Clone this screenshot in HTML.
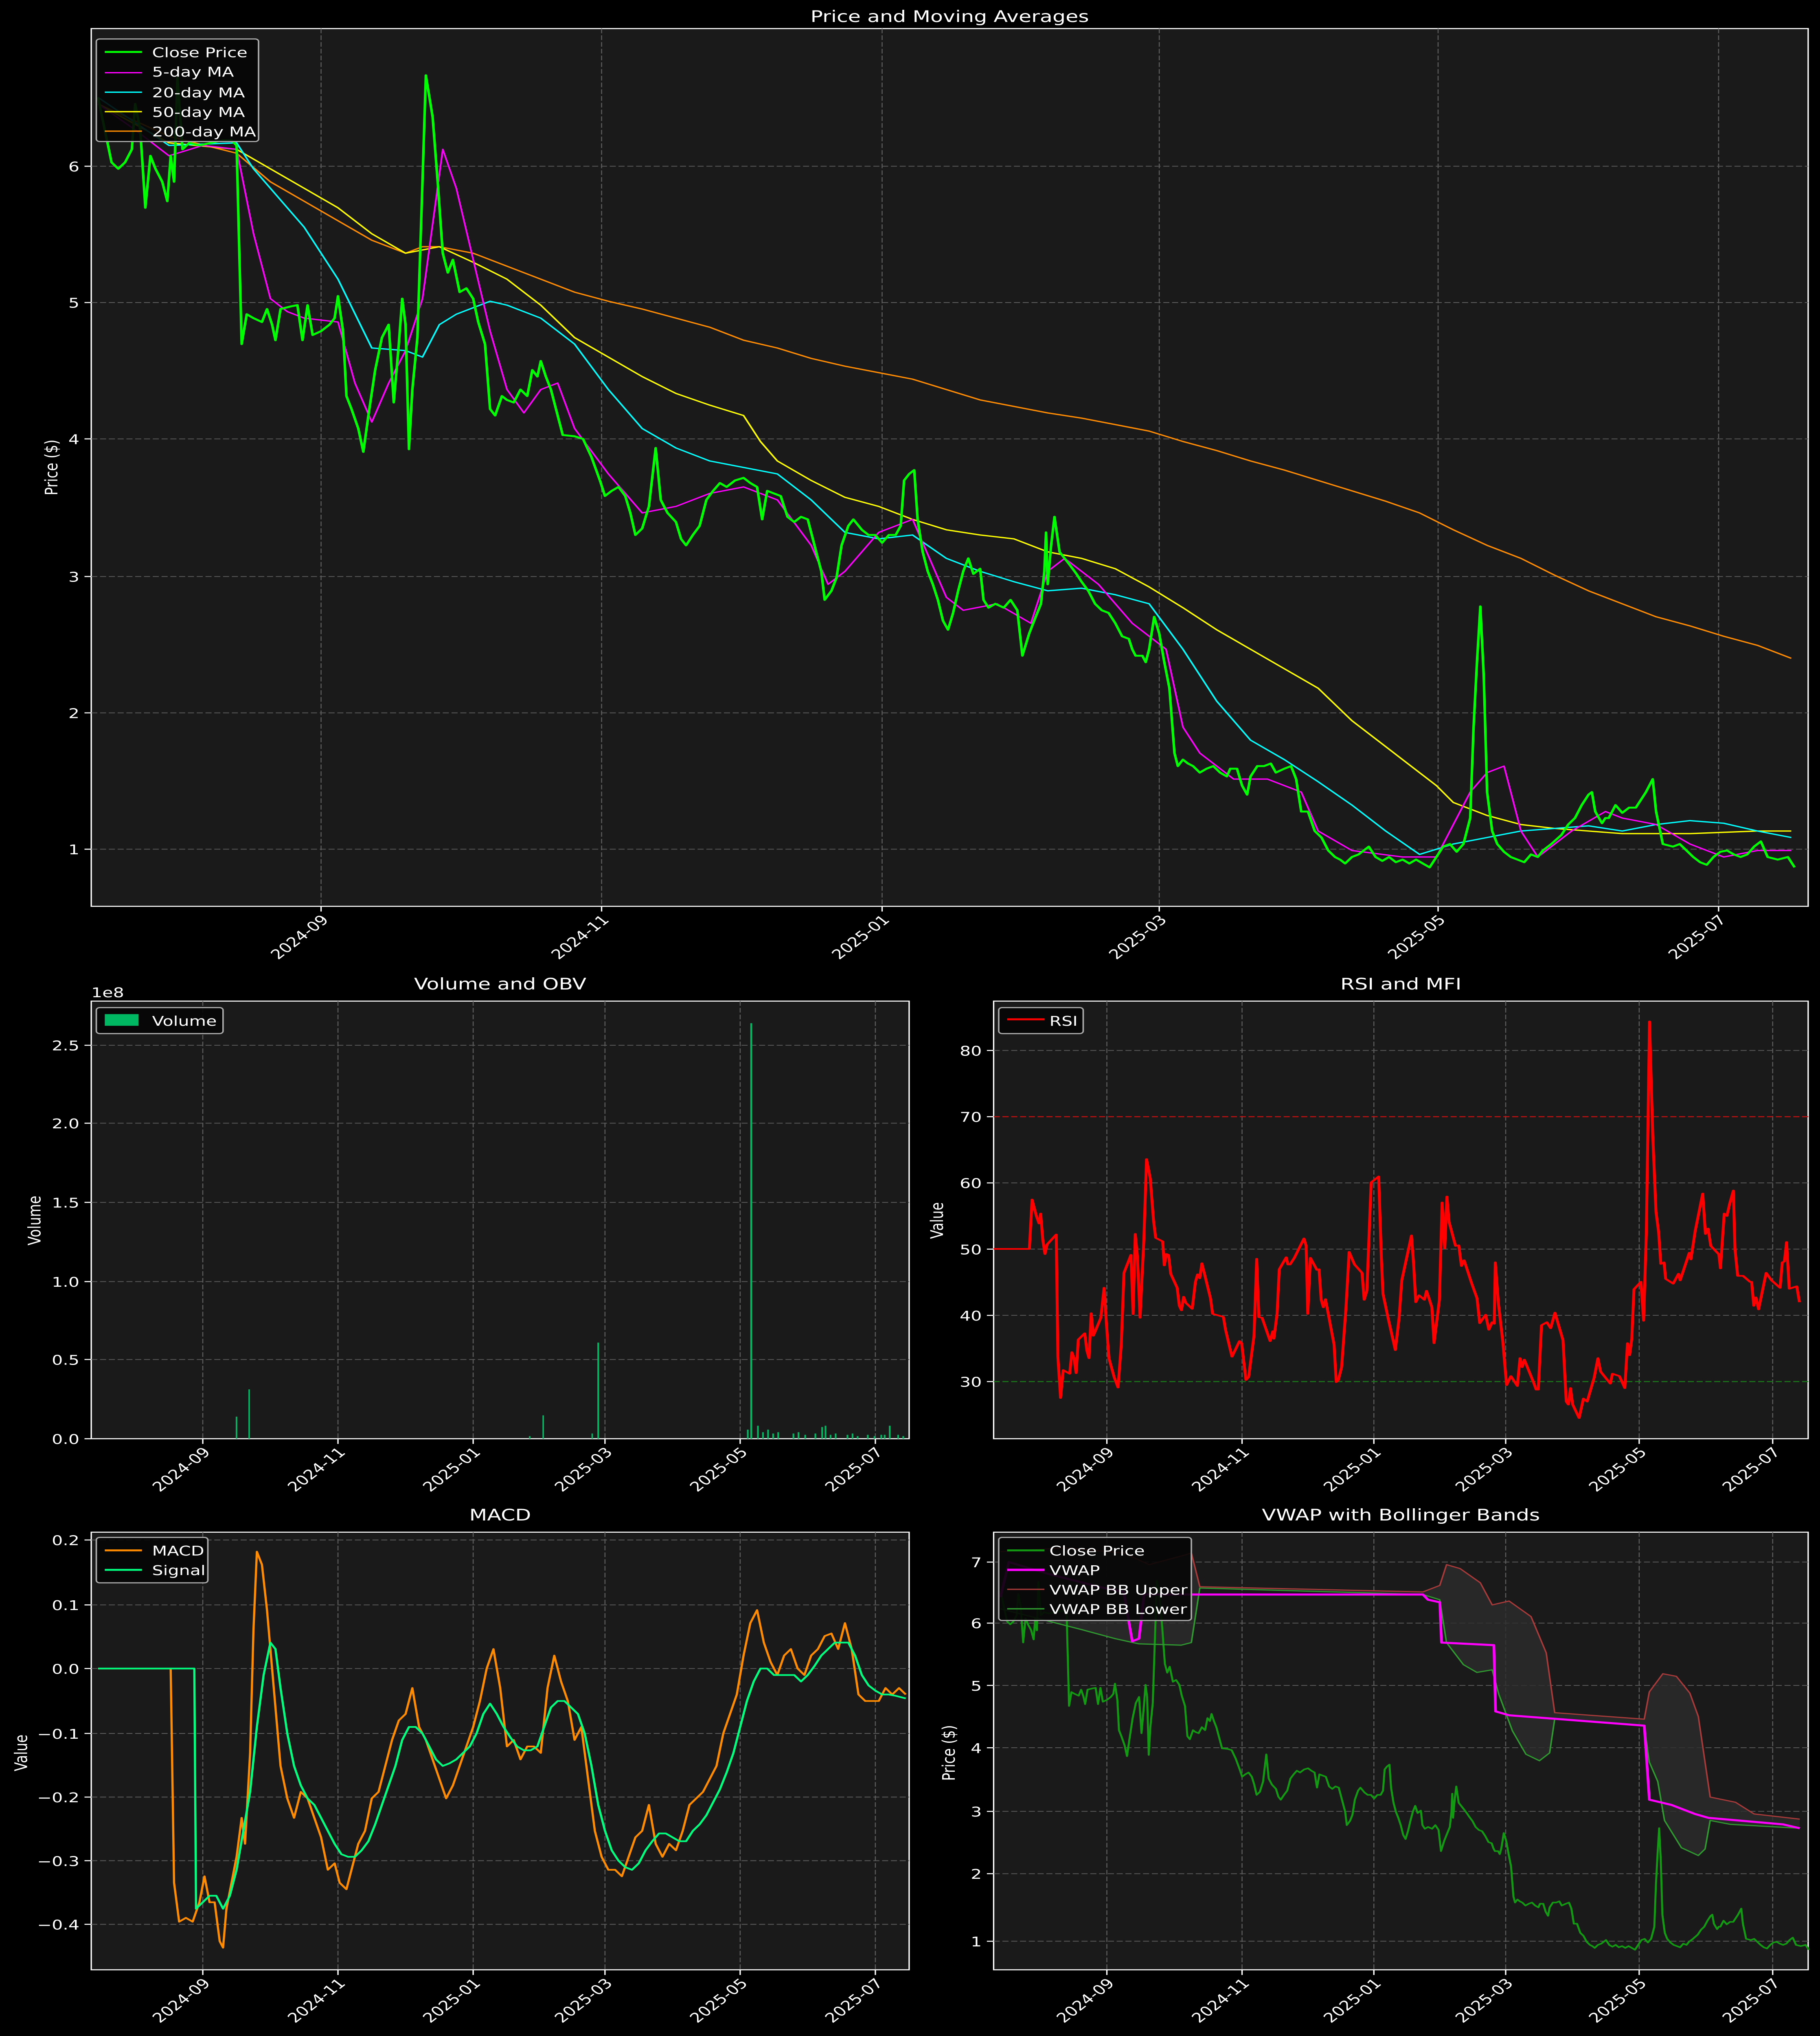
<!DOCTYPE html>
<html><head><meta charset="utf-8"><style>
html,body{margin:0;padding:0;background:#000;width:100vw;height:100vh;overflow:hidden}
svg{display:block;position:absolute;left:0;top:0;width:100vw;height:100vh}
text{font-family:"DejaVu Sans","Liberation Sans",sans-serif;fill:#fff}
.g{stroke:#5c5c5c;stroke-width:.6;stroke-dasharray:3.6,1.6;fill:none}
.sp{fill:#1a1a1a;stroke:#fff;stroke-width:.8}
.tk{stroke:#fff;stroke-width:.8}
.t{font-size:10.3px}
.ti{font-size:12.2px}
.l{fill:none;stroke-linejoin:round}
.n{fill:none;stroke-linejoin:round;vector-effect:non-scaling-stroke}
.lg{fill:#050505;fill-opacity:.9;stroke:#aaa;stroke-width:.9}
</style></head><body>
<svg viewBox="0 0 1077 1568" preserveAspectRatio="none" xmlns="http://www.w3.org/2000/svg">
<rect width="1077" height="1568" fill="#000"/>
<defs>
<polyline id="close" class="l" points="58,75 62,100 66,125 70,130 74,125 78,115 80,80 83,100 86,160 89,120 92,130 96,140 99,155 101,120 103,140 105,60 108,115 112,110 118,112 125,110 132,108 137,108 140,112 143,265 146,242 150,245 155,248 158,238 161,250 163,262 166,238 172,236 176,235 179,262 182,235 185,258 190,255 195,250 198,245 200,228 203,255 205,305 208,315 212,330 215,348 218,320 222,285 226,260 230,250 233,310 236,265 238,230 240,250 242,346 244,300 247,260 250,140 252,58 256,90 259,140 262,195 265,210 268,200 272,225 276,222 280,230 283,248 287,265 290,315 293,320 297,305 300,308 304,310 308,300 312,305 315,285 318,290 320,278 323,290 326,300 330,320 333,335 340,336 345,338 350,352 355,370 358,382 362,378 366,375 370,382 373,395 376,412 380,407 384,390 388,345 391,385 395,395 400,402 403,415 406,420 410,412 414,405 418,385 422,378 426,372 430,375 435,370 440,368 444,372 448,375 451,400 454,378 458,380 462,382 466,398 470,402 474,398 478,400 482,420 486,440 488,462 492,455 495,445 498,420 502,405 505,400 510,408 514,412 518,412 522,418 526,412 530,412 533,405 535,370 538,365 541,362 543,400 546,425 549,440 552,450 555,462 558,478 561,485 564,472 567,455 570,440 573,430 576,442 580,438 582,462 585,468 589,465 594,468 598,462 602,470 605,505 609,488 612,478 616,465 618,440 619,410 620,450 622,420 624,398 627,425 630,430 633,435 637,442 640,448 644,455 648,465 652,470 656,472 660,480 664,490 668,492 670,500 672,505 676,505 678,510 680,500 683,475 686,488 689,510 692,530 695,580 697,590 700,585 703,588 706,590 710,595 714,592 718,590 722,595 726,598 728,592 732,592 735,605 738,612 740,598 744,590 748,590 752,588 755,595 760,592 764,590 767,600 770,625 774,625 778,640 782,645 786,655 790,660 793,662 796,665 800,660 804,658 808,654 810,652 814,660 818,663 822,660 826,664 830,662 834,665 838,662 842,665 846,668 850,660 854,652 858,650 862,656 866,650 870,630 872,560 874,510 876,467 878,520 880,610 883,640 886,650 890,656 894,660 898,662 902,664 906,658 910,660 913,655 918,650 924,643 928,635 932,630 936,620 940,612 942,610 944,625 948,634 950,630 952,630 956,620 960,626 964,622 968,622 974,610 978,600 980,625 984,650 990,652 994,650 998,655 1002,660 1006,664 1010,666 1014,660 1018,656 1022,655 1026,658 1030,660 1034,658 1038,652 1042,648 1046,660 1052,662 1058,660 1062,668"/>
</defs>

<!-- ===== TOP CHART ===== -->
<text class="ti" x="562" y="17" text-anchor="middle">Price and Moving Averages</text>
<rect class="sp" x="54" y="22" width="1016" height="676"/>
<g class="g">
<line x1="190" y1="22" x2="190" y2="698"/><line x1="356" y1="22" x2="356" y2="698"/><line x1="522" y1="22" x2="522" y2="698"/><line x1="686" y1="22" x2="686" y2="698"/><line x1="851" y1="22" x2="851" y2="698"/><line x1="1017" y1="22" x2="1017" y2="698"/>
<line x1="54" y1="128" x2="1070" y2="128"/><line x1="54" y1="233" x2="1070" y2="233"/><line x1="54" y1="338" x2="1070" y2="338"/><line x1="54" y1="444" x2="1070" y2="444"/><line x1="54" y1="549" x2="1070" y2="549"/><line x1="54" y1="654" x2="1070" y2="654"/>
</g>
<g class="tk">
<line x1="50" y1="128" x2="54" y2="128"/><line x1="50" y1="233" x2="54" y2="233"/><line x1="50" y1="338" x2="54" y2="338"/><line x1="50" y1="444" x2="54" y2="444"/><line x1="50" y1="549" x2="54" y2="549"/><line x1="50" y1="654" x2="54" y2="654"/>
<line x1="190" y1="698" x2="190" y2="702"/><line x1="356" y1="698" x2="356" y2="702"/><line x1="522" y1="698" x2="522" y2="702"/><line x1="686" y1="698" x2="686" y2="702"/><line x1="851" y1="698" x2="851" y2="702"/><line x1="1017" y1="698" x2="1017" y2="702"/>
</g>
<g class="t" text-anchor="end">
<text x="47" y="132">6</text><text x="47" y="237">5</text><text x="47" y="342">4</text><text x="47" y="448">3</text><text x="47" y="553">2</text><text x="47" y="658">1</text>
<text transform="translate(195,709) rotate(-45)">2024-09</text>
<text transform="translate(361,709) rotate(-45)">2024-11</text>
<text transform="translate(527,709) rotate(-45)">2025-01</text>
<text transform="translate(691,709) rotate(-45)">2025-03</text>
<text transform="translate(856,709) rotate(-45)">2025-05</text>
<text transform="translate(1022,709) rotate(-45)">2025-07</text>
</g>
<text class="t" transform="translate(34,360) rotate(-90)" text-anchor="middle">Price ($)</text>

<polyline class="l" stroke="#ff8c00" stroke-width="1" points="58,80 100,105 140,118 160,140 180,155 200,170 220,185 240,195 250,190 260,190 280,195 300,205 320,215 340,225 360,232 380,238 400,245 420,252 440,262 460,268 480,276 500,282 520,287 540,292 560,300 580,308 600,313 620,318 640,322 660,327 680,332 700,340 720,347 740,355 760,362 780,370 800,378 820,386 840,395 860,408 880,420 900,430 920,443 940,455 960,465 980,475 1000,482 1020,490 1040,497 1060,507"/>
<polyline class="l" stroke="#ffff00" stroke-width="1" points="58,80 100,110 140,115 160,130 180,145 200,160 220,180 240,195 260,190 280,202 300,215 320,235 340,260 360,275 380,290 400,303 420,312 440,320 450,340 460,355 480,370 500,383 520,390 540,400 560,408 580,412 600,415 620,425 640,430 660,438 680,452 700,468 720,485 740,500 760,515 780,530 800,555 820,575 840,595 850,605 860,618 880,628 900,635 920,638 940,640 960,642 980,642 1000,642 1020,641 1040,640 1060,640"/>
<polyline class="l" stroke="#00ffff" stroke-width="1" points="58,75 100,112 140,110 150,130 160,145 180,175 200,215 220,268 240,270 250,275 260,250 270,242 290,232 300,235 320,245 340,265 360,300 380,330 400,345 420,355 440,360 460,365 480,385 500,410 520,415 540,412 560,430 580,440 600,448 620,455 640,453 660,458 680,465 700,500 720,540 740,570 760,585 780,602 800,620 820,640 840,658 860,650 880,645 900,640 920,638 940,636 960,640 980,635 1000,632 1020,634 1040,640 1060,645"/>
<polyline class="l" stroke="#ff00ff" stroke-width="1" points="58,80 80,100 100,120 120,112 140,115 150,180 160,230 170,240 180,245 200,248 210,295 220,325 230,295 240,270 250,230 262,115 270,145 280,200 290,255 300,300 310,318 320,300 330,295 340,330 360,365 380,395 400,390 420,380 440,375 460,385 480,420 490,450 500,440 520,410 540,400 550,430 560,460 570,470 590,465 610,480 620,440 630,430 650,450 670,480 690,500 700,560 710,580 730,600 750,600 770,610 780,640 800,655 830,660 850,660 870,610 880,595 890,590 900,640 910,660 930,640 950,625 960,630 980,635 1000,650 1020,660 1040,655 1060,655"/>
<use href="#close" stroke="#00ff00" stroke-width="1.5"/>

<rect class="lg" x="57" y="30" width="96" height="79" rx="2"/>
<g stroke-width="1.5"><line x1="62" y1="40" x2="84" y2="40" stroke="#00ff00"/><line x1="62" y1="56" x2="84" y2="56" stroke="#ff00ff" stroke-width="1"/><line x1="62" y1="71" x2="84" y2="71" stroke="#00ffff" stroke-width="1"/><line x1="62" y1="86" x2="84" y2="86" stroke="#ffff00" stroke-width="1"/><line x1="62" y1="101" x2="84" y2="101" stroke="#ff8c00" stroke-width="1"/></g>
<g class="t"><text x="90" y="44">Close Price</text><text x="90" y="59">5-day MA</text><text x="90" y="75">20-day MA</text><text x="90" y="90">50-day MA</text><text x="90" y="105">200-day MA</text></g>

<!-- ===== VOLUME ===== -->
<text class="ti" x="296" y="762" text-anchor="middle">Volume and OBV</text>
<text class="t" x="54" y="768">1e8</text>
<rect class="sp" x="54" y="771" width="484" height="337"/>
<g class="g">
<line x1="120" y1="771" x2="120" y2="1108"/><line x1="200" y1="771" x2="200" y2="1108"/><line x1="280" y1="771" x2="280" y2="1108"/><line x1="358" y1="771" x2="358" y2="1108"/><line x1="438" y1="771" x2="438" y2="1108"/><line x1="518" y1="771" x2="518" y2="1108"/>
<line x1="54" y1="1047" x2="538" y2="1047"/><line x1="54" y1="987" x2="538" y2="987"/><line x1="54" y1="926" x2="538" y2="926"/><line x1="54" y1="865" x2="538" y2="865"/><line x1="54" y1="805" x2="538" y2="805"/>
</g>
<g fill="#00b862">
<rect x="139.5" y="1091" width=".9" height="17"/><rect x="147" y="1070" width=".9" height="38"/><rect x="321" y="1090" width=".9" height="18"/><rect x="313" y="1106" width=".9" height="2"/><rect x="353.5" y="1034" width="1" height="74"/><rect x="350" y="1104" width=".9" height="4"/>
<rect x="444" y="788" width="1.1" height="320"/><rect x="442" y="1101" width="1" height="7"/>
<rect x="448" y="1098" width="1" height="10"/><rect x="451" y="1103" width="1" height="5"/><rect x="454" y="1101" width="1" height="7"/><rect x="457" y="1104" width="1" height="4"/><rect x="460" y="1103" width="1" height="5"/>
<rect x="469" y="1104" width="1" height="4"/><rect x="472" y="1103" width="1" height="5"/><rect x="476" y="1105" width="1" height="3"/>
<rect x="482" y="1104" width="1" height="4"/><rect x="486" y="1099" width="1" height="9"/><rect x="488" y="1098" width="1" height="10"/><rect x="491" y="1105" width="1" height="3"/><rect x="494" y="1104" width="1" height="4"/>
<rect x="501" y="1105" width="1" height="3"/><rect x="504" y="1104" width="1" height="4"/><rect x="507" y="1106" width="1" height="2"/><rect x="513" y="1105" width="1" height="3"/><rect x="517" y="1106" width="1" height="2"/>
<rect x="521" y="1105" width="1" height="3"/><rect x="523" y="1105" width="1" height="3"/><rect x="526" y="1098" width="1" height="10"/><rect x="531" y="1105" width="1" height="3"/><rect x="534" y="1106" width="1" height="2"/>
</g>
<g class="tk">
<line x1="50" y1="1108" x2="54" y2="1108"/><line x1="50" y1="1047" x2="54" y2="1047"/><line x1="50" y1="987" x2="54" y2="987"/><line x1="50" y1="926" x2="54" y2="926"/><line x1="50" y1="865" x2="54" y2="865"/><line x1="50" y1="805" x2="54" y2="805"/>
<line x1="120" y1="1108" x2="120" y2="1112"/><line x1="200" y1="1108" x2="200" y2="1112"/><line x1="280" y1="1108" x2="280" y2="1112"/><line x1="358" y1="1108" x2="358" y2="1112"/><line x1="438" y1="1108" x2="438" y2="1112"/><line x1="518" y1="1108" x2="518" y2="1112"/>
</g>
<g class="t" text-anchor="end">
<text x="47" y="1112">0.0</text><text x="47" y="1051">0.5</text><text x="47" y="991">1.0</text><text x="47" y="930">1.5</text><text x="47" y="869">2.0</text><text x="47" y="809">2.5</text>
<text transform="translate(125,1119) rotate(-45)">2024-09</text>
<text transform="translate(205,1119) rotate(-45)">2024-11</text>
<text transform="translate(285,1119) rotate(-45)">2025-01</text>
<text transform="translate(363,1119) rotate(-45)">2025-03</text>
<text transform="translate(443,1119) rotate(-45)">2025-05</text>
<text transform="translate(523,1119) rotate(-45)">2025-07</text>
</g>
<text class="t" transform="translate(24,940) rotate(-90)" text-anchor="middle">Volume</text>
<rect class="lg" x="57" y="776" width="75" height="20" rx="2"/>
<rect x="62" y="781" width="20" height="9" fill="#00b862"/>
<text class="t" x="90" y="790">Volume</text>

<!-- ===== RSI ===== -->
<text class="ti" x="829" y="762" text-anchor="middle">RSI and MFI</text>
<rect class="sp" x="588" y="771" width="482" height="337"/>
<g class="g">
<line x1="655" y1="771" x2="655" y2="1108"/><line x1="735" y1="771" x2="735" y2="1108"/><line x1="813" y1="771" x2="813" y2="1108"/><line x1="891" y1="771" x2="891" y2="1108"/><line x1="970" y1="771" x2="970" y2="1108"/><line x1="1049" y1="771" x2="1049" y2="1108"/>
<line x1="588" y1="809" x2="1070" y2="809"/><line x1="588" y1="911" x2="1070" y2="911"/><line x1="588" y1="962" x2="1070" y2="962"/><line x1="588" y1="1013" x2="1070" y2="1013"/>
</g>
<line x1="588" y1="860" x2="1070" y2="860" stroke="#c01010" stroke-width=".8" stroke-dasharray="3.6,1.6"/>
<line x1="588" y1="1064" x2="1070" y2="1064" stroke="#1a7a1a" stroke-width=".8" stroke-dasharray="3.6,1.6"/>
<g transform="translate(578.3,759) scale(0.318,0.2305)"><polyline class="l" stroke="#ff0000" stroke-width="5.4" points="30,880 97,880 102,715 110,770 115,795 118,762 122,850 126,897 130,865 147,832 150,1240 155,1378 160,1285 172,1297 176,1225 180,1245 184,1295 188,1183 200,1162 204,1220 208,1245 212,1095 216,1170 230,1110 236,1010 240,1120 245,1245 255,1310 262,1343 268,1200 273,960 286,900 290,1098 294,830 298,905 303,1110 310,850 315,580 322,645 328,785 332,843 345,855 348,935 352,897 356,900 360,963 372,1010 376,1070 380,1085 384,1040 388,1060 400,1080 406,990 410,965 414,978 418,928 434,1045 438,1097 458,1107 462,1150 474,1240 488,1188 492,1195 500,1318 505,1308 515,1170 520,913 524,1108 530,1110 545,1188 550,1155 552,1180 558,1095 562,948 575,908 578,932 582,932 590,910 608,845 612,870 615,1097 620,910 632,950 636,948 640,1050 644,1075 648,1048 664,1200 668,1325 672,1318 678,1275 686,1080 692,890 702,932 716,960 720,1050 725,1020 733,658 747,638 752,910 755,1030 765,1115 778,1218 785,1110 790,985 808,835 812,930 816,1058 822,1035 832,1050 836,1020 846,1075 850,1195 860,1050 865,725 870,878 874,705 878,790 890,870 896,868 901,937 906,918 920,995 930,1045 935,1128 946,1100 952,1150 958,1125 962,1130 964,925 970,1065 978,1190 985,1335 993,1305 1005,1338 1010,1245 1014,1275 1018,1250 1035,1325 1040,1350 1044,1350 1050,1135 1060,1125 1067,1145 1075,1093 1090,1185 1096,1390 1100,1400 1104,1345 1108,1400 1120,1445 1128,1380 1135,1390 1148,1310 1155,1245 1160,1290 1178,1330 1182,1297 1195,1305 1205,1345 1210,1195 1214,1235 1218,1180 1222,1015 1235,990 1240,1120 1245,830 1251,120 1257,500 1263,755 1268,825 1272,930 1278,925 1281,980 1295,996 1305,963 1308,985 1325,893 1328,915 1336,820 1350,695 1355,830 1360,812 1365,870 1380,898 1383,945 1390,762 1395,770 1400,730 1407,685 1410,880 1415,970 1425,970 1438,990 1441,990 1445,1070 1449,1042 1454,1082 1468,960 1478,985 1494,1010 1498,925 1502,922 1506,857 1511,1013 1525,1005 1530,1058"/></g>
<g class="tk">
<line x1="584" y1="809" x2="588" y2="809"/><line x1="584" y1="860" x2="588" y2="860"/><line x1="584" y1="911" x2="588" y2="911"/><line x1="584" y1="962" x2="588" y2="962"/><line x1="584" y1="1013" x2="588" y2="1013"/><line x1="584" y1="1064" x2="588" y2="1064"/>
<line x1="655" y1="1108" x2="655" y2="1112"/><line x1="735" y1="1108" x2="735" y2="1112"/><line x1="813" y1="1108" x2="813" y2="1112"/><line x1="891" y1="1108" x2="891" y2="1112"/><line x1="970" y1="1108" x2="970" y2="1112"/><line x1="1049" y1="1108" x2="1049" y2="1112"/>
</g>
<g class="t" text-anchor="end">
<text x="581" y="813">80</text><text x="581" y="864">70</text><text x="581" y="915">60</text><text x="581" y="966">50</text><text x="581" y="1017">40</text><text x="581" y="1068">30</text>
<text transform="translate(660,1119) rotate(-45)">2024-09</text>
<text transform="translate(740,1119) rotate(-45)">2024-11</text>
<text transform="translate(818,1119) rotate(-45)">2025-01</text>
<text transform="translate(896,1119) rotate(-45)">2025-03</text>
<text transform="translate(975,1119) rotate(-45)">2025-05</text>
<text transform="translate(1054,1119) rotate(-45)">2025-07</text>
</g>
<text class="t" transform="translate(558,940) rotate(-90)" text-anchor="middle">Value</text>
<rect class="lg" x="591" y="776" width="50" height="20" rx="2"/>
<line x1="596" y1="785" x2="618" y2="785" stroke="#ff0000" stroke-width="1.5"/>
<text class="t" x="621" y="790">RSI</text>

<!-- ===== MACD ===== -->
<text class="ti" x="296" y="1171" text-anchor="middle">MACD</text>
<rect class="sp" x="54" y="1180" width="484" height="337"/>
<g class="g">
<line x1="120" y1="1180" x2="120" y2="1517"/><line x1="200" y1="1180" x2="200" y2="1517"/><line x1="280" y1="1180" x2="280" y2="1517"/><line x1="358" y1="1180" x2="358" y2="1517"/><line x1="438" y1="1180" x2="438" y2="1517"/><line x1="518" y1="1180" x2="518" y2="1517"/>
<line x1="54" y1="1186" x2="538" y2="1186"/><line x1="54" y1="1236" x2="538" y2="1236"/><line x1="54" y1="1285" x2="538" y2="1285"/><line x1="54" y1="1335" x2="538" y2="1335"/><line x1="54" y1="1384" x2="538" y2="1384"/><line x1="54" y1="1433" x2="538" y2="1433"/><line x1="54" y1="1482" x2="538" y2="1482"/>
</g>
<polyline class="l" stroke="#ff8c00" stroke-width="1.3" points="58,1285 101,1285 103,1450 106,1480 110,1477 114,1480 118,1465 121,1445 124,1465 127,1465 130,1495 132,1500 134,1470 137,1450 140,1430 143,1400 145,1420 148,1350 150,1255 152,1195 155,1205 158,1240 160,1270 163,1315 166,1360 170,1385 174,1400 178,1380 182,1385 186,1400 190,1415 194,1440 198,1435 201,1450 205,1455 208,1440 212,1420 216,1410 220,1385 224,1380 228,1360 232,1340 236,1325 240,1320 244,1300 248,1330 252,1340 256,1355 260,1370 264,1385 268,1375 272,1360 276,1345 280,1330 284,1310 288,1285 292,1270 296,1300 300,1345 304,1340 308,1355 312,1345 316,1345 320,1350 324,1300 328,1275 332,1295 336,1310 340,1340 344,1330 348,1370 352,1410 356,1430 360,1440 364,1440 368,1445 372,1430 376,1415 380,1410 384,1390 388,1420 392,1430 396,1420 400,1425 404,1410 408,1390 412,1385 416,1380 420,1370 424,1360 428,1335 432,1320 436,1305 440,1275 444,1250 448,1240 452,1265 456,1280 460,1290 464,1275 468,1270 472,1285 476,1290 480,1275 484,1270 488,1260 492,1258 496,1270 500,1250 504,1270 508,1305 512,1310 516,1310 520,1310 524,1300 528,1305 532,1300 536,1305"/>
<polyline class="l" stroke="#00ff7f" stroke-width="1.3" points="58,1285 115,1285 116,1470 120,1465 124,1460 128,1460 132,1470 136,1460 140,1440 144,1410 148,1380 152,1330 156,1290 160,1265 163,1270 166,1300 170,1335 174,1360 178,1375 182,1385 186,1390 190,1400 194,1410 198,1420 202,1428 206,1430 210,1430 214,1425 218,1418 222,1405 226,1390 230,1375 234,1360 238,1340 242,1330 246,1330 250,1335 254,1345 258,1355 262,1360 266,1358 270,1355 274,1350 278,1345 282,1335 286,1320 290,1312 294,1320 298,1330 302,1338 306,1345 310,1348 314,1348 318,1345 322,1330 326,1315 330,1310 334,1310 338,1315 342,1320 346,1335 350,1360 354,1390 358,1410 362,1425 366,1433 370,1438 374,1440 378,1435 382,1425 386,1418 390,1412 394,1412 398,1415 402,1418 406,1418 410,1410 414,1405 418,1398 422,1388 426,1378 430,1365 434,1350 438,1330 442,1310 446,1295 450,1285 454,1285 458,1290 462,1290 466,1290 470,1290 474,1295 478,1290 482,1283 486,1275 490,1270 494,1265 498,1265 502,1265 506,1275 510,1290 514,1298 518,1302 522,1305 526,1305 530,1306 536,1308"/>
<g class="tk">
<line x1="50" y1="1186" x2="54" y2="1186"/><line x1="50" y1="1236" x2="54" y2="1236"/><line x1="50" y1="1285" x2="54" y2="1285"/><line x1="50" y1="1335" x2="54" y2="1335"/><line x1="50" y1="1384" x2="54" y2="1384"/><line x1="50" y1="1433" x2="54" y2="1433"/><line x1="50" y1="1482" x2="54" y2="1482"/>
<line x1="120" y1="1517" x2="120" y2="1521"/><line x1="200" y1="1517" x2="200" y2="1521"/><line x1="280" y1="1517" x2="280" y2="1521"/><line x1="358" y1="1517" x2="358" y2="1521"/><line x1="438" y1="1517" x2="438" y2="1521"/><line x1="518" y1="1517" x2="518" y2="1521"/>
</g>
<g class="t" text-anchor="end">
<text x="47" y="1190">0.2</text><text x="47" y="1240">0.1</text><text x="47" y="1289">0.0</text><text x="47" y="1339">−0.1</text><text x="47" y="1388">−0.2</text><text x="47" y="1437">−0.3</text><text x="47" y="1486">−0.4</text>
<text transform="translate(125,1528) rotate(-45)">2024-09</text>
<text transform="translate(205,1528) rotate(-45)">2024-11</text>
<text transform="translate(285,1528) rotate(-45)">2025-01</text>
<text transform="translate(363,1528) rotate(-45)">2025-03</text>
<text transform="translate(443,1528) rotate(-45)">2025-05</text>
<text transform="translate(523,1528) rotate(-45)">2025-07</text>
</g>
<text class="t" transform="translate(16,1350) rotate(-90)" text-anchor="middle">Value</text>
<rect class="lg" x="57" y="1184" width="66" height="35" rx="2"/>
<line x1="62" y1="1194" x2="84" y2="1194" stroke="#ff8c00" stroke-width="1.5"/>
<line x1="62" y1="1209" x2="84" y2="1209" stroke="#00ff7f" stroke-width="1.5"/>
<text class="t" x="90" y="1198">MACD</text><text class="t" x="90" y="1213">Signal</text>

<!-- ===== VWAP ===== -->
<text class="ti" x="829" y="1171" text-anchor="middle">VWAP with Bollinger Bands</text>
<rect class="sp" x="588" y="1180" width="482" height="337"/>
<g class="g">
<line x1="655" y1="1180" x2="655" y2="1517"/><line x1="735" y1="1180" x2="735" y2="1517"/><line x1="813" y1="1180" x2="813" y2="1517"/><line x1="891" y1="1180" x2="891" y2="1517"/><line x1="970" y1="1180" x2="970" y2="1517"/><line x1="1049" y1="1180" x2="1049" y2="1517"/>
<line x1="588" y1="1203" x2="1070" y2="1203"/><line x1="588" y1="1250" x2="1070" y2="1250"/><line x1="588" y1="1298" x2="1070" y2="1298"/><line x1="588" y1="1346" x2="1070" y2="1346"/><line x1="588" y1="1395" x2="1070" y2="1395"/><line x1="588" y1="1443" x2="1070" y2="1443"/><line x1="588" y1="1495" x2="1070" y2="1495"/>
</g>
<polygon fill="#2c2c2c" fill-opacity=".8" points="592,1195 630,1192 665,1196 680,1205 700,1198 705,1196 710,1222 842,1226 852,1221 856,1205 864,1208 876,1219 883,1236 893,1233 906,1245 915,1273 920,1319 973,1324 976,1303 984,1289 992,1291 1000,1304 1005,1322 1012,1384 1027,1388 1038,1397 1065,1401 1065,1408 1024,1405 1012,1402 1009,1424 1005,1429 995,1423 985,1402 981,1372 976,1357 973,1329 920,1324 917,1350 911,1356 903,1351 895,1333 887,1305 883,1286 874,1288 866,1282 856,1265 852,1232 842,1228 710,1223 705,1265 699,1267 674,1266 660,1262 640,1255 610,1245 592,1239"/>
<g transform="matrix(0.4764,0,0,0.4658,564.5,1190.4)"><use href="#close" stroke="#139a13" stroke-width="2.5"/></g>
<polyline class="l" stroke="#a83a3a" stroke-width=".9" points="592,1195 630,1192 665,1196 680,1205 700,1198 705,1196 710,1222 842,1226 852,1221 856,1205 864,1208 876,1219 883,1236 893,1233 906,1245 915,1273 920,1319 973,1324 976,1303 984,1289 992,1291 1000,1304 1005,1322 1012,1384 1027,1388 1038,1397 1065,1401"/>
<polyline class="l" stroke="#2f9a2f" stroke-width=".9" points="592,1239 610,1245 640,1255 660,1262 674,1266 699,1267 705,1265 710,1223 842,1228 852,1232 856,1265 866,1282 874,1288 883,1286 887,1305 895,1333 903,1351 911,1356 917,1350 920,1324 973,1329 976,1357 981,1372 985,1402 995,1423 1005,1429 1009,1424 1012,1402 1024,1405 1065,1408"/>
<polyline class="l" stroke="#ff00ff" stroke-width="1.6" points="592,1230 597,1203 620,1212 650,1222 665,1226 670,1264 674,1262 677,1228 842,1228 845,1232 852,1234 853,1265 884,1267 885,1318 893,1321 973,1329 976,1386 989,1390 1003,1397 1011,1400 1055,1405 1065,1408"/>
<g class="tk">
<line x1="584" y1="1203" x2="588" y2="1203"/><line x1="584" y1="1250" x2="588" y2="1250"/><line x1="584" y1="1298" x2="588" y2="1298"/><line x1="584" y1="1346" x2="588" y2="1346"/><line x1="584" y1="1395" x2="588" y2="1395"/><line x1="584" y1="1443" x2="588" y2="1443"/><line x1="584" y1="1495" x2="588" y2="1495"/>
<line x1="655" y1="1517" x2="655" y2="1521"/><line x1="735" y1="1517" x2="735" y2="1521"/><line x1="813" y1="1517" x2="813" y2="1521"/><line x1="891" y1="1517" x2="891" y2="1521"/><line x1="970" y1="1517" x2="970" y2="1521"/><line x1="1049" y1="1517" x2="1049" y2="1521"/>
</g>
<g class="t" text-anchor="end">
<text x="581" y="1207">7</text><text x="581" y="1254">6</text><text x="581" y="1302">5</text><text x="581" y="1350">4</text><text x="581" y="1399">3</text><text x="581" y="1447">2</text><text x="581" y="1499">1</text>
<text transform="translate(660,1528) rotate(-45)">2024-09</text>
<text transform="translate(740,1528) rotate(-45)">2024-11</text>
<text transform="translate(818,1528) rotate(-45)">2025-01</text>
<text transform="translate(896,1528) rotate(-45)">2025-03</text>
<text transform="translate(975,1528) rotate(-45)">2025-05</text>
<text transform="translate(1054,1528) rotate(-45)">2025-07</text>
</g>
<text class="t" transform="translate(565,1350) rotate(-90)" text-anchor="middle">Price ($)</text>
<rect class="lg" x="591" y="1184" width="114" height="64" rx="2" fill-opacity=".85"/>
<line x1="596" y1="1194" x2="618" y2="1194" stroke="#139a13" stroke-width="1.5"/>
<line x1="596" y1="1209" x2="618" y2="1209" stroke="#ff00ff" stroke-width="1.8"/>
<line x1="596" y1="1224" x2="618" y2="1224" stroke="#a83a3a" stroke-width="1"/>
<line x1="596" y1="1239" x2="618" y2="1239" stroke="#2f9a2f" stroke-width="1"/>
<g class="t"><text x="621" y="1198">Close Price</text><text x="621" y="1213">VWAP</text><text x="621" y="1228">VWAP BB Upper</text><text x="621" y="1243">VWAP BB Lower</text></g>
</svg>
</body></html>
